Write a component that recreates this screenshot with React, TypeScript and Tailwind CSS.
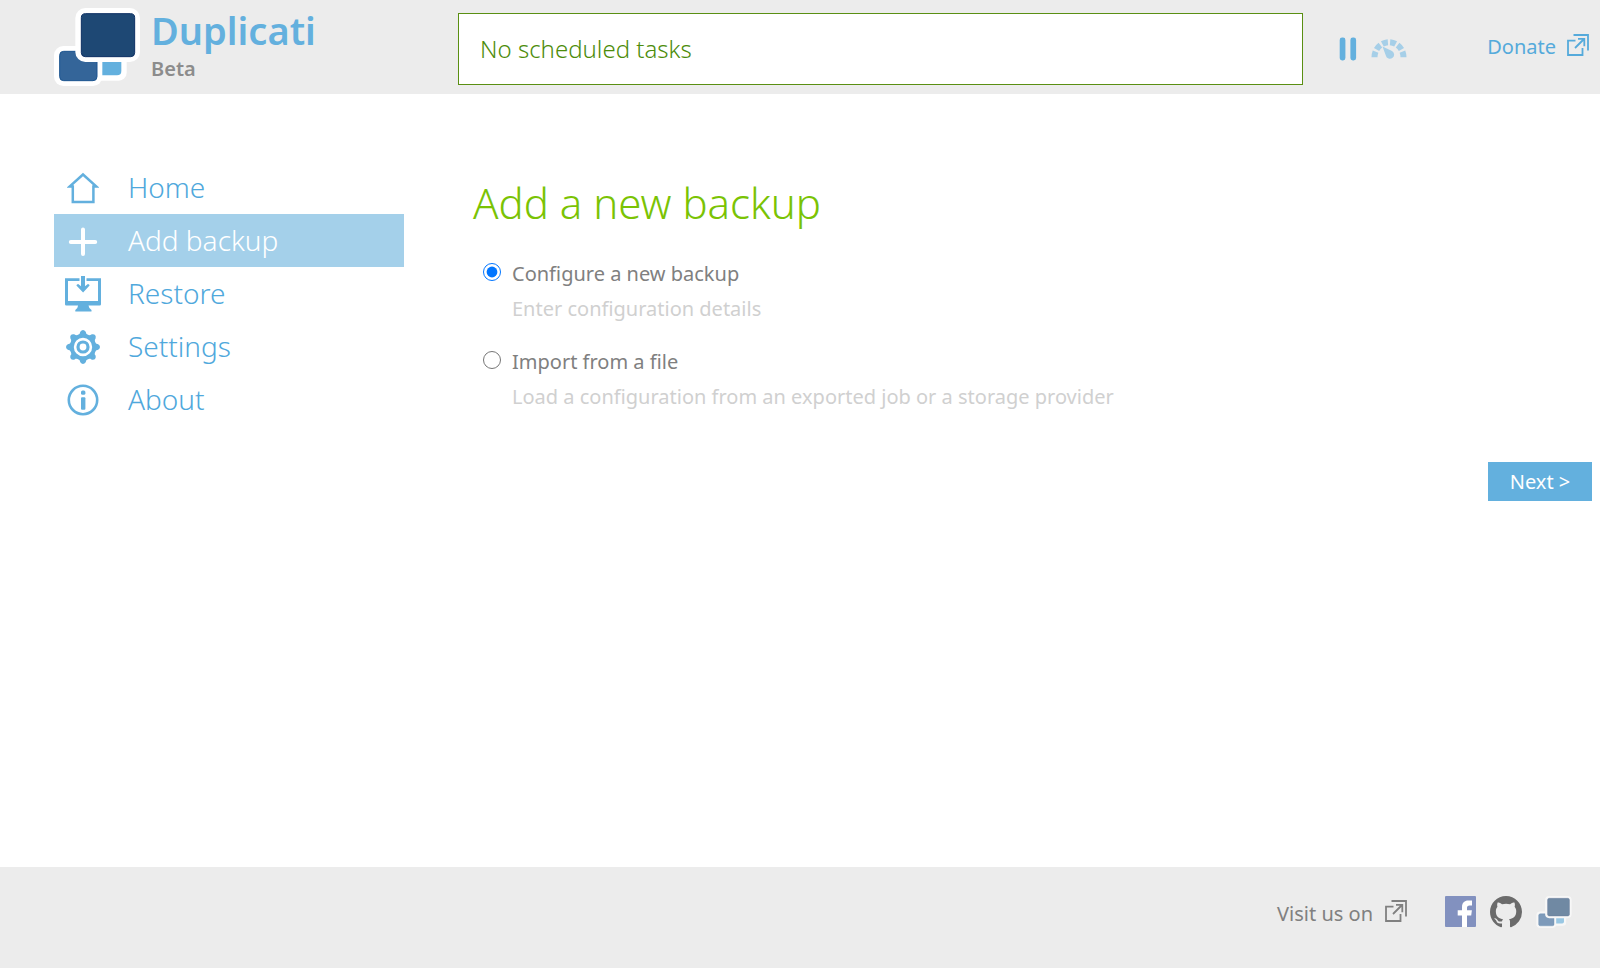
import { useState } from "react";
import type { ReactNode } from "react";

function Logo({ className }: { className: string }) {
  return (
    <svg viewBox="0 0 258 234" className={className} aria-hidden="true">
      <rect x="112" y="96" width="106" height="122" rx="24" fill="#fff" />
      <rect x="0" y="114" width="145" height="120" rx="28" fill="#fff" />
      <path d="M145 110H202V189Q202 202 189 202H145Z" fill="#63b0de" />
      <rect x="17" y="130" width="112" height="88" rx="12" fill="#346599" stroke="#1c5590" strokeWidth="3" />
      <rect x="64" y="0" width="194" height="162" rx="30" fill="#fff" />
      <rect x="82" y="17" width="160" height="129" rx="12" fill="#1e4874" stroke="#0d2f63" strokeWidth="3" />
    </svg>
  );
}

function ExternalIcon({ className }: { className: string }) {
  return (
    <svg viewBox="0 0 22 22" className={className} fill="none" stroke="currentColor" strokeWidth="1.8" aria-hidden="true">
      <path d="M8.500 6.700H1V21h14.500v-7" />
      <path d="M6.500 1h14.500v15.400" />
      <path d="M8 14 17 5M11 4.900h6.300v7.300" />
    </svg>
  );
}

function HomeIcon() {
  return (
    <svg viewBox="0 0 32 32" className="size-8" fill="none" stroke="currentColor" strokeWidth="2.500" aria-hidden="true">
      <path d="M16 2.500 2.600 14.500H5.800V30H26.400V14.500H29.400Z" />
    </svg>
  );
}

function PlusIcon() {
  return (
    <svg viewBox="0 0 32 32" className="size-8" fill="none" stroke="currentColor" strokeWidth="4" strokeLinecap="round" aria-hidden="true">
      <path d="M16 4.600V29M3.800 16.900H28.200" />
    </svg>
  );
}

function RestoreIcon() {
  return (
    <svg viewBox="0 0 36 36" className="size-9" fill="currentColor" aria-hidden="true">
      <path d="M0 2.200h14.500v2.700H3V25h30V4.900H21.500V2.200H36V28.200q0 1.300-1.300 1.300H23.500q.5 3.600 3 4.600v1.400H10.300v-1.400q2.300-1 2.800-4.600H1.300Q0 29.500 0 28.200Z" />
      <path d="M16 0h4v10.200l2.900-2.200q1.500 0 1.700 1.500l-6.500 7-6.700-7q.3-1.500 1.800-1.500l2.800 2.200Z" />
    </svg>
  );
}

function GearIcon() {
  return (
    <svg viewBox="-17 -17 34 34" className="size-[34px]" fill="none" stroke="currentColor" aria-hidden="true">
      <circle r="11.200" strokeWidth="4" />
      <circle r="5" strokeWidth="3.200" />
      <g fill="currentColor" stroke="none">
        {[0, 45, 90, 135, 180, 225, 270, 315].map((angle) => (
          <path key={angle} transform={`rotate(${angle})`} d="M-5.200-11.500Q-3-12.500-2.700-15.200Q-1.500-17 0-17Q1.500-17 2.700-15.200Q3-12.500 5.200-11.500Z" />
        ))}
      </g>
    </svg>
  );
}

function InfoIcon() {
  return (
    <svg viewBox="0 0 32 32" className="size-8" aria-hidden="true">
      <circle cx="16" cy="16" r="14.200" fill="none" stroke="currentColor" strokeWidth="2.600" />
      <rect x="14" y="6.500" width="4.400" height="4.200" rx="1.500" fill="currentColor" />
      <rect x="14" y="13.200" width="4.400" height="12.500" rx="1" fill="currentColor" />
    </svg>
  );
}

function PauseIcon() {
  return (
    <svg viewBox="0 0 18 24" className="h-6 w-[18px]" fill="currentColor" aria-hidden="true">
      <rect x="0.700" y="0.500" width="5.700" height="23" rx="2.400" />
      <rect x="11.400" y="0.500" width="5.700" height="23" rx="2.400" />
    </svg>
  );
}

function GaugeIcon() {
  return (
    <svg viewBox="0 0 36 20" className="h-5 w-9" fill="none" stroke="currentColor" aria-hidden="true">
      <path d="M3.500 18.300A14.500 15 0 0 1 32.500 18.300" pathLength="100" strokeWidth="6" strokeDasharray="12.500 5" />
      <path d="M11.500 7.500 20.500 11.700A4.200 4.200 0 1 1 14.800 16.500Z" fill="currentColor" stroke="none" />
    </svg>
  );
}

function FacebookIcon() {
  return (
    <svg viewBox="0 0 31 31" className="size-[31px]" aria-hidden="true">
      <rect width="31" height="31" rx="1" fill="#8291bf" />
      <path d="M17 31V19.500H12.700V14.300H17V11.200C17 6.900 19.500 4.600 23.300 4.600H27V9.400H24.600C22.600 9.400 22 10.300 22 11.800V14.300H26.900L26.200 19.500H22V31Z" fill="#fff" />
    </svg>
  );
}

function GithubIcon() {
  return (
    <svg viewBox="0 0 16 16" className="size-8" fill="#6b6b6b" aria-hidden="true">
      <path d="M8 0C3.580 0 0 3.580 0 8c0 3.540 2.290 6.530 5.470 7.590.4.070.55-.17.55-.38 0-.19-.01-.82-.01-1.490-2.010.37-2.530-.49-2.690-.94-.09-.23-.48-.94-.82-1.130-.28-.15-.68-.52-.01-.53.63-.01 1.080.58 1.230.82.72 1.210 1.870.87 2.330.66.07-.52.28-.87.51-1.070-1.780-.2-3.640-.89-3.640-3.950 0-.87.31-1.590.82-2.150-.08-.2-.36-1.020.08-2.120 0 0 .67-.21 2.200.82.64-.18 1.320-.27 2-.27s1.360.09 2 .27c1.530-1.040 2.200-.82 2.200-.82.44 1.100.16 1.920.08 2.120.51.56.82 1.270.82 2.150 0 3.070-1.870 3.750-3.650 3.950.29.25.54.73.54 1.480 0 1.070-.01 1.930-.01 2.200 0 .21.15.46.55.38A8.010 8.010 0 0 0 16 8c0-4.420-3.580-8-8-8Z" />
    </svg>
  );
}

const navItems: { label: string; icon: ReactNode }[] = [
  { label: "Home", icon: <HomeIcon /> },
  { label: "Add backup", icon: <PlusIcon /> },
  { label: "Restore", icon: <RestoreIcon /> },
  { label: "Settings", icon: <GearIcon /> },
  { label: "About", icon: <InfoIcon /> },
];

const options = [
  { id: "new", label: "Configure a new backup", detail: "Enter configuration details" },
  { id: "import", label: "Import from a file", detail: "Load a configuration from an exported job or a storage provider" },
];

export default function App() {
  const [choice, setChoice] = useState("new");

  return (
    <div className="flex min-h-screen flex-col bg-white font-['Noto_Sans',sans-serif] text-xl text-[#808080]">
      <header className="flex h-[94px] items-start bg-[#ececec]">
        <a href="#home" className="flex w-[458px] shrink-0 gap-[11px] pt-2 pl-[54px]">
          <Logo className="h-[78px] w-[86px]" />
          <span className="flex flex-col">
            <span className="text-[38px] leading-[44px] font-semibold text-[#63b0de]">Duplicati</span>
            <span className="text-xl leading-[34px] font-semibold text-[#8c8c8c]">Beta</span>
          </span>
        </a>
        <div className="mt-[13px] flex h-[72px] flex-1 items-center border border-[#5a8f12] bg-white px-[21px] text-2xl font-light text-[#4c8c0a]">
          No scheduled tasks
        </div>
        <div className="flex h-[94px] w-[297px] shrink-0 items-center justify-between pr-[11px] pl-9 text-[#63b0de]">
          <div className="flex items-center gap-[14px] pt-1">
            <button type="button" aria-label="Pause"><PauseIcon /></button>
            <button type="button" aria-label="Throttle" className="text-[#a6cfe8]"><GaugeIcon /></button>
          </div>
          <a href="#donate" className="flex items-center gap-[11px] text-[#55aadb]">
            Donate
            <ExternalIcon className="mb-1 size-[22px]" />
          </a>
        </div>
      </header>

      <div className="flex flex-1 pt-[67px] pr-2 pl-[54px]">
        <nav className="w-[350px] shrink-0">
          <ul>
            {navItems.map((item) => (
              <li key={item.label}>
                <a
                  href={`#${item.label.toLowerCase().replace(" ", "-")}`}
                  className={
                    item.label === "Add backup"
                      ? "flex h-[53px] items-center bg-[#a4d0ea] text-[28px] font-light text-white"
                      : "flex h-[53px] items-center text-[28px] font-light text-[#4fa8dc]"
                  }
                >
                  <span className={item.label === "Add backup" ? "mr-4 flex w-[58px] justify-center" : "mr-4 flex w-[58px] justify-center text-[#63b0de]"}>
                    {item.icon}
                  </span>
                  {item.label}
                </a>
              </li>
            ))}
          </ul>
        </nav>

        <main className="ml-[69px] flex-1">
          <h1 className="pt-3 text-[42px] leading-[60px] font-light text-[#7ac304]">Add a new backup</h1>
          <form className="mt-[23px]" onSubmit={(event) => event.preventDefault()}>
            {options.map((option) => (
              <div key={option.id} className="mb-[18px] flex gap-[11px] pl-[10px]">
                <input
                  type="radio"
                  id={option.id}
                  name="source"
                  checked={choice === option.id}
                  onChange={() => setChoice(option.id)}
                  aria-describedby={`${option.id}-detail`}
                  className="mt-[7px] size-[18px] shrink-0"
                />
                <div className="leading-[35px]">
                  <label htmlFor={option.id} className="block">{option.label}</label>
                  <p id={`${option.id}-detail`} className="text-[#d0d0d0]">{option.detail}</p>
                </div>
              </div>
            ))}
            <div className="flex justify-end pt-[30px]">
              <button type="submit" className="h-[39px] w-[104px] bg-[#63b0de] text-white">Next &gt;</button>
            </div>
          </form>
        </main>
      </div>

      <footer className="flex h-[101px] items-start justify-end bg-[#ececec] pt-7 pr-7">
        <div className="flex h-8 items-center gap-3">
          <span className="pt-[5px]">Visit us on</span>
          <ExternalIcon className="size-[22px]" />
        </div>
        <div className="ml-[38px] flex h-[33px] items-center gap-[14px]">
          <a href="#facebook" aria-label="Facebook"><FacebookIcon /></a>
          <a href="#github" aria-label="GitHub"><GithubIcon /></a>
          <a href="#duplicati" aria-label="Duplicati"><Logo className="h-8 w-9 opacity-60" /></a>
        </div>
      </footer>
    </div>
  );
}
